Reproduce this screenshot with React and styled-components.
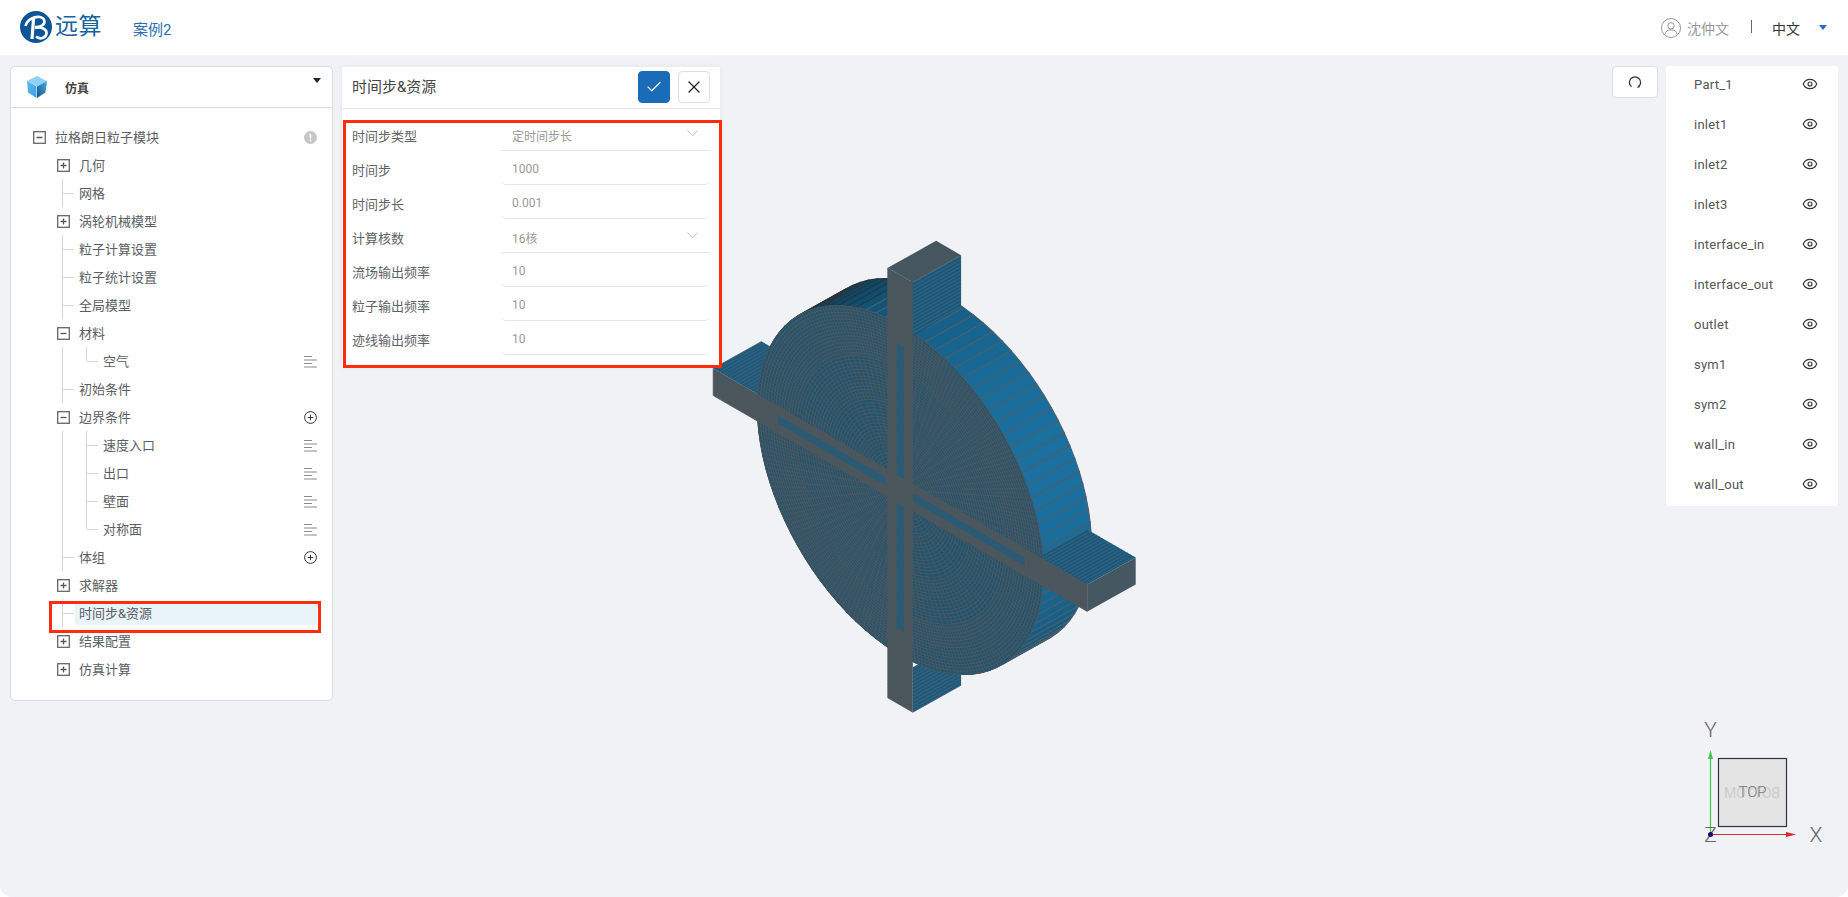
import React from "react";
import styled, { createGlobalStyle } from "styled-components";
import { Eye, Check, X } from "lucide-react";

const FONT = `Roboto, "Noto Sans CJK SC", "Noto Sans", sans-serif`;

const Global = createGlobalStyle`
  html, body { margin: 0; padding: 0; background: #fff; }
  * { box-sizing: border-box; }
  body { font-family: ${FONT}; }
`;

const Page = styled.div`
  width: 1848px; height: 897px; overflow: hidden; position: relative;
  background: #f0f2f6; border-radius: 12px; display: flex; flex-direction: column;
`;
const Header = styled.header`
  height: 55px; flex: none; background: #fff; display: flex; align-items: center;
  padding: 0 20px; position: relative; z-index: 3;
`;
const Brand = styled.div`display: flex; align-items: center; gap: 3px; margin-top: -1px;`;
const BrandName = styled.span`font-size: 23px; color: #17639c; letter-spacing: 0.5px; line-height: 32px; font-weight: 400;`;
const CaseName = styled.span`font-size: 15px; color: #2a6db0; margin-left: 31px; margin-top: 2px;`;
const HeaderRight = styled.div`margin-left: auto; display: flex; align-items: center; margin-right: 1px;`;
const UserName = styled.span`font-size: 14px; color: #999; margin-left: 6px;`;
const Sep = styled.span`width: 1px; height: 13px; background: #666; margin: 0 20px 0 22px; margin-top: -3px;`;
const Lang = styled.span`font-size: 14px; color: #333;`;
const LangCaret = styled.span`
  width: 0; height: 0; margin-left: 19px; border-left: 4px solid transparent;
  border-right: 4px solid transparent; border-top: 5px solid #2a6dc4;
`;

const Workspace = styled.main`
  flex: 1; position: relative; display: flex; align-items: flex-start; padding: 11px 10px 0 10px;
`;
const TreePanel = styled.section`
  width: 323px; height: 635px; background: #fff; border: 1px solid #d9dce3; border-radius: 5px;
  position: relative; z-index: 1; flex: none;
`;
const TreeHead = styled.div`
  height: 41px; border-bottom: 1px solid #dcdfe6; display: flex; align-items: center; padding: 0 11px 0 16px;
`;
const TreeTitle = styled.span`font-size: 12px; font-weight: 700; color: #444; margin-left: 18px;`;
const HeadCaret = styled.span`
  width: 0; height: 0; margin-left: auto; margin-top: -13px; border-left: 4px solid transparent;
  border-right: 4px solid transparent; border-top: 5px solid #222;
`;
const TreeBody = styled.div`padding: 15px 15px 0 1px;`;
const Row = styled.div`
  height: 28px; position: relative; display: flex; align-items: center;
  padding-left: ${p => 21 + p.$level * 24}px;
`;
const Slot = styled.span`width: 18px; flex: none; display: flex; align-items: center;`;
const RowLabel = styled.span`
  flex: 1; height: 23px; line-height: 23px; padding-left: 4px; font-size: 13px; color: #5a5d63;
  border-radius: 3px; background: ${p => (p.$active ? "#e9f3fa" : "transparent")};
`;
const Trailing = styled.span`position: absolute; right: 0; top: 8px; display: flex; width: 13px; height: 13px;`;
const VGuide = styled.i`
  position: absolute; width: 1px; background: #d6d6d6; top: 0; left: ${p => p.$x}px;
  height: ${p => (p.$half ? "14px" : "28px")};
`;
const HGuide = styled.i`
  position: absolute; height: 1px; background: #d6d6d6; top: 14px; width: 11px; left: ${p => p.$x}px;
`;
const RedBox = styled.div`
  position: absolute; border: 3px solid #ff2d0c; pointer-events: none; z-index: 4;
  left: ${p => p.$l}px; top: ${p => p.$t}px; width: ${p => p.$w}px; height: ${p => p.$h}px;
`;

const FormPanel = styled.section`
  width: 378px; height: 300px; margin: 1px 0 0 9px; background: #fff; position: relative; z-index: 1; flex: none;
  box-shadow: 0 0 6px rgba(0,0,0,0.06);
`;
const FormHead = styled.div`
  height: 42px; border-bottom: 1px solid #e4e7ed; display: flex; align-items: center; padding: 0 10px;
`;
const FormTitle = styled.span`font-size: 15px; color: #444; margin-right: auto; margin-top: -4px;`;
const IconBtn = styled.button`
  width: 32px; height: 32px; padding: 0; display: flex; align-items: center; justify-content: center;
  border-radius: 4px; margin-left: 8px; margin-top: -1px;
  border: 1px solid ${p => (p.$primary ? "#1a6bb8" : "#dcdfe6")};
  background: ${p => (p.$primary ? "#1a6bb8" : "#fff")};
  color: ${p => (p.$primary ? "#fff" : "#222")};
`;
const FormBody = styled.div`padding: 8px 10px 0;`;
const FormRow = styled.div`display: grid; grid-template-columns: 149px 1fr; height: 34px; align-items: center;`;
const FormLabel = styled.label`font-size: 13px; color: #606266; padding-top: 2px;`;
const Field = styled.div`
  height: 34px; display: flex; align-items: center; padding: ${p => (p.$select ? "4px" : "3px")} 12px 0 11px;
  font-size: 12px; color: #999; border-bottom: 1px solid #e4e7ed;
  border-radius: ${p => (p.$select ? "0" : "0 0 5px 5px")};
  justify-content: space-between;
`;

const Spacer = styled.div`flex: 1;`;
const RefreshBtn = styled.button`
  width: 46px; height: 32px; padding: 0; background: #fff; border: 1px solid #dcdfe6; border-radius: 4px;
  display: flex; align-items: center; justify-content: center; z-index: 1; flex: none;
`;
const PartList = styled.ul`
  list-style: none; margin: 0 0 0 8px; padding: 0; width: 172px; background: #fff; border-radius: 4px; z-index: 1; flex: none;
`;
const PartRow = styled.li`
  height: 40px; display: flex; align-items: center; justify-content: space-between;
  padding: 0 20px 4px 28px; font-size: 13px; color: #555; letter-spacing: 0.25px;
`;

const Model = styled.svg`position: absolute; left: 690px; top: 110px; z-index: 0;`;
const Axes = styled.svg`position: absolute; left: 1660px; top: 590px; z-index: 0;`;

/* ---------- icons ---------- */
const Logo = () => (
  <svg width="32" height="32" viewBox="0 0 32 32">
    <circle cx="16" cy="16" r="16" fill="#0f5499" />
    <path d="M5.500 15C7 9 14 5 20 6c5 1 6 6 2 8.500-2 1.300-4 1.500-7 1.500" fill="none" stroke="#fff" strokeWidth="2.600" />
    <path d="M13.500 8 12 28" fill="none" stroke="#fff" strokeWidth="3.200" />
    <path d="M15 17c6-1.500 12 1 11.500 5.500C26 27 20 29 16 25.500" fill="none" stroke="#fff" strokeWidth="2.600" />
  </svg>
);
const Cube = () => (
  <svg width="20" height="22" viewBox="0 0 20 22">
    <defs>
      <linearGradient id="cl" x1="0" y1="0" x2="1" y2="1"><stop offset="0" stopColor="#5db8f0" /><stop offset="1" stopColor="#3f9fe6" /></linearGradient>
      <linearGradient id="cr" x1="0" y1="1" x2="1" y2="0"><stop offset="0" stopColor="#15548f" /><stop offset="1" stopColor="#4aa8e4" /></linearGradient>
    </defs>
    <path d="M0 5 10 0l10 5-10 5.500z" fill="#8ed2f6" />
    <path d="M0 5l9.500 5.500V22L1 16.500z" fill="url(#cl)" />
    <path d="M20 5l-10 5.500V22l8.500-5.500z" fill="url(#cr)" />
  </svg>
);
const Box = ({ open }) => (
  <svg width="13" height="13" viewBox="0 0 13 13">
    <rect x="0.700" y="0.700" width="11.600" height="11.600" fill="#fff" stroke="#666" strokeWidth="1.300" />
    <path d={open ? "M3.500 6.500h6" : "M3.500 6.500h6M6.500 3.500v6"} stroke="#555" strokeWidth="1.300" />
  </svg>
);
const Lines = () => (
  <svg width="13" height="13" viewBox="0 0 13 13">
    <path d="M0 1.500h8M0 5h13M0 8.500h8M0 12h13" stroke="#8a8a8a" strokeWidth="1" />
  </svg>
);
const PlusCircle = () => (
  <svg width="13" height="13" viewBox="0 0 13 13" fill="none">
    <circle cx="6.500" cy="6.500" r="5.900" stroke="#333" />
    <path d="M3.800 6.500h5.400M6.500 3.800v5.400" stroke="#333" />
  </svg>
);
const Info = () => (
  <svg width="13" height="13" viewBox="0 0 13 13">
    <circle cx="6.500" cy="6.500" r="6.500" fill="#c6c6c6" />
    <path d="M6.500 2.800v4.600M6.500 8.800v1.500" stroke="#fff" strokeWidth="1.500" />
  </svg>
);
const Chevron = () => (
  <svg width="11" height="7" viewBox="0 0 11 7" style={{ marginTop: -4 }}>
    <path d="M.5.500 5.500 6l5-5.500" fill="none" stroke="#c0c4cc" />
  </svg>
);
const User = () => (
  <svg width="20" height="20" viewBox="0 0 20 20" fill="none" stroke="#8a8a8a" strokeWidth="0.900">
    <circle cx="10" cy="10" r="9.500" />
    <circle cx="10" cy="7.800" r="3.200" />
    <path d="M3.800 16.500c.6-3.200 3-4.700 6.200-4.700s5.600 1.500 6.200 4.700" />
  </svg>
);
const Refresh = () => (
  <svg width="14" height="14" viewBox="0 0 14 14" fill="none">
    <path d="M3.500 11.800A5.600 5.600 0 1 1 10.500 11.800" stroke="#333" strokeWidth="1.300" />
    <path d="M8.700 12.600l2.800-.2-.1-2.700z" fill="#333" />
  </svg>
);

/* ---------- 3D model drawn as a projected mesh ---------- */
const OX = 690, OY = 165;
const C = [900.3 - OX, 490 - OY];
const D = [48.3, -27];
const R = 165, SW = 14.4, SH = 13.5, L = 216;
const P = (u, v, w = 0) => [
  C[0] + u * 0.866 + w * D[0],
  C[1] + u * 0.5 - v + w * D[1],
];
const pts = a => a.map(p => p.map(n => n.toFixed(2)).join(",")).join(" ");
const quad = (u0, v0, w0, u1, v1, w1, u2, v2, w2, u3, v3, w3) =>
  pts([P(u0, v0, w0), P(u1, v1, w1), P(u2, v2, w2), P(u3, v3, w3)]);
const mix = (a, b, t) => {
  const h = x => [1, 3, 5].map(i => parseInt(x.slice(i, i + 2), 16));
  const A = h(a), B = h(b);
  return `rgb(${A.map((c, i) => Math.round(c + (B[i] - c) * t)).join(",")})`;
};

const wall = [];
const SEG = 90;
for (let i = 0; i < SEG; i++) {
  const a = (i / SEG) * 2 * Math.PI, b = ((i + 1) / SEG) * 2 * Math.PI;
  const mid = (a + b) / 2;
  const s = Math.max(0, Math.cos(mid - (30 * Math.PI) / 180));
  wall.push({
    key: i,
    points: pts([
      P(R * Math.cos(a), R * Math.sin(a), 0), P(R * Math.cos(a), R * Math.sin(a), 1),
      P(R * Math.cos(b), R * Math.sin(b), 1), P(R * Math.cos(b), R * Math.sin(b), 0),
    ]),
    fill: mix("#0e4766", "#1b709f", s),
    dark: s < 0.2,
  });
}

const path = (list) => list.map(seg => "M" + seg.map(p => p.map(n => n.toFixed(1)).join(" ")).join("L")).join("");
const ringSegs = [];
for (let r = 3; r < R; r += 3) {
  const seg = [];
  for (let k = 0; k <= 120; k++) {
    const t = (k / 120) * 2 * Math.PI;
    seg.push(P(r * Math.cos(t), r * Math.sin(t)));
  }
  ringSegs.push(seg);
}
/* spokes thin out toward the centre, as in an O-grid mesh */
const spokeSegs = [];
for (let k = 0; k < 240; k++) {
  const t = (k / 240) * 2 * Math.PI;
  const start = k % 8 === 0 ? 12 : k % 4 === 0 ? 40 : k % 2 === 0 ? 80 : 120;
  spokeSegs.push([P(start * Math.cos(t), start * Math.sin(t)), P(R * Math.cos(t), R * Math.sin(t))]);
}
const discEdge = [];
for (let k = 0; k < 120; k++) {
  const t = (k / 120) * 2 * Math.PI;
  discEdge.push(P(R * Math.cos(t), R * Math.sin(t)));
}

const wLines = (fn, from, to, step) => {
  const out = [];
  for (let x = from; x < to; x += step) out.push([fn(x, 0), fn(x, 1)]);
  return out;
};
const vStripLines = [];
for (let u = -SW; u <= SW; u += 3.4) vStripLines.push([P(u, 215), P(u, -215)]);
for (let v = -215; v <= 215; v += 3.4) vStripLines.push([P(-SW, v), P(SW, v)]);
const hStripLines = [];
for (let v = -SH; v <= SH; v += 3.4) hStripLines.push([P(-L, v), P(L, v)]);
for (let u = -L; u <= L; u += 3.4) hStripLines.push([P(u, -SH), P(u, SH)]);

const GRAY = "#485860";
const LINE = "#50565a";
const TAB_LINE = "#4a6170";

const MeshModel = () => (
  <Model width="460" height="560" viewBox="0 0 460 560">
    {wall.map(q => (
      <polygon key={q.key} points={q.points} fill={q.fill} stroke={q.dark ? "#28343c" : "#4a5f6c"} strokeWidth="1.100" />
    ))}

    {/* upper tab */}
    <polygon points={quad(SW, 215, 0, SW, 215, 1, SW, 164, 1, SW, 160, 0)} fill="#175a80" />
    <path d={path(wLines((v, w) => P(SW, v, w), 164, 215, 3.6))} stroke={TAB_LINE} strokeWidth="0.900" />
    <polygon points={quad(-SW, 215, 0, -SW, 215, 1, SW, 215, 1, SW, 215, 0)} fill="#46565f" />
    {/* lower tab */}
    <polygon points={quad(SW, -215, 0, SW, -215, 1, SW, -170, 1, SW, -170, 0)} fill="#1c5a7e" />
    <path d={path(wLines((v, w) => P(SW, v, w), -215, -170, 3.6))} stroke={TAB_LINE} strokeWidth="0.900" />
    {/* right tab */}
    <polygon points={quad(160, SH, 0, 160, SH, 1, L, SH, 1, L, SH, 0)} fill="#175a80" />
    <path d={path(wLines((u, w) => P(u, SH, w), 160, L, 3.6))} stroke={TAB_LINE} strokeWidth="0.900" />
    <polygon points={quad(L, SH, 0, L, SH, 1, L, -SH, 1, L, -SH, 0)} fill="#455861" />
    {/* left tab */}
    <polygon points={quad(-L, SH, 0, -L, SH, 1, -160, SH, 1, -160, SH, 0)} fill="#1c5a7e" />
    <path d={path(wLines((u, w) => P(u, SH, w), -L, -160, 3.6))} stroke={TAB_LINE} strokeWidth="0.800" />

    {/* front disc */}
    <polygon points={pts(discEdge)} fill="#1a5676" />
    <path d={path(ringSegs)} fill="none" stroke={LINE} strokeWidth="1.100" />
    <path d={path(spokeSegs)} fill="none" stroke={LINE} strokeWidth="0.900" />
    <polygon points={pts(discEdge)} fill="none" stroke="#4b5458" strokeWidth="1" />

    {/* cross strips */}
    <polygon points={quad(-SW, 215, 0, SW, 215, 0, SW, -215, 0, -SW, -215, 0)} fill={GRAY} />
    <path d={path(vStripLines)} stroke="#50555a" strokeWidth="0.800" fill="none" />
    <polygon points={quad(-L, SH, 0, L, SH, 0, L, -SH, 0, -L, -SH, 0)} fill={GRAY} />
    <path d={path(hStripLines)} stroke="#50555a" strokeWidth="0.800" fill="none" />

    {/* blue slots along the strips */}
    {[[13, 145], [-140, -15]].map(([a, b]) => (
      <polygon key={a} points={quad(-4.2, b, 0, 4.2, b, 0, 4.2, a, 0, -4.2, a, 0)} fill="#2b5a75" />
    ))}
    {[[-141, -17], [15, 144]].map(([a, b]) => (
      <polygon key={a} points={quad(a, 4, 0, b, 4, 0, b, -4, 0, a, -4, 0)} fill="#2b5a75" />
    ))}
  </Model>
);

const AxisGizmo = () => (
  <Axes width="180" height="220" viewBox="0 0 180 220" fontFamily="Roboto, sans-serif">
    <rect x="58.500" y="113.500" width="68" height="68" fill="#e4e4e4" stroke="#333" strokeWidth="1.200" />
    <text x="92" y="153" textAnchor="middle" fontSize="14" fill="#ccc" transform="translate(184 0) scale(-1 1)" textLength="56">BOTTOM</text>
    <text x="92.500" y="152" textAnchor="middle" fontSize="15" fontWeight="300" fill="#777">TOP</text>
    <path d="M50.500 189V112" stroke="#3fc94c" strokeWidth="1.200" />
    <path d="M50.500 105l-2.500 9h5z" fill="#3fc94c" />
    <path d="M50.500 189.500H128" stroke="#c83232" strokeWidth="1.200" />
    <path d="M136 189.500l-10-2.500v5z" fill="#d42a2a" />
    <text x="50.500" y="92" textAnchor="middle" fontSize="21" fontWeight="300" fill="#666">Y</text>
    <text x="156" y="197" textAnchor="middle" fontSize="21" fontWeight="300" fill="#666">X</text>
    <text x="50.500" y="197" textAnchor="middle" fontSize="21" fontWeight="300" fill="#666">Z</text>
    <circle cx="50.500" cy="189.500" r="2.500" fill="#101070" />
  </Axes>
);

/* ---------- data ---------- */
const tree = [
  { t: "拉格朗日粒子模块", l: 0, box: "open", icon: "info" },
  { t: "几何", l: 1, box: "plus" },
  { t: "网格", l: 1, leaf: true },
  { t: "涡轮机械模型", l: 1, box: "plus" },
  { t: "粒子计算设置", l: 1, leaf: true },
  { t: "粒子统计设置", l: 1, leaf: true },
  { t: "全局模型", l: 1, leaf: true },
  { t: "材料", l: 1, box: "open" },
  { t: "空气", l: 2, last: true, icon: "lines" },
  { t: "初始条件", l: 1, leaf: true },
  { t: "边界条件", l: 1, box: "open", icon: "plus" },
  { t: "速度入口", l: 2, icon: "lines" },
  { t: "出口", l: 2, icon: "lines" },
  { t: "壁面", l: 2, icon: "lines" },
  { t: "对称面", l: 2, last: true, icon: "lines" },
  { t: "体组", l: 1, leaf: true, icon: "plus" },
  { t: "求解器", l: 1, box: "plus" },
  { t: "时间步&资源", l: 1, leaf: true, active: true },
  { t: "结果配置", l: 1, box: "plus" },
  { t: "仿真计算", l: 1, box: "plus" },
];

const formRows = [
  ["时间步类型", "定时间步长", true],
  ["时间步", "1000"],
  ["时间步长", "0.001"],
  ["计算核数", "16核", true],
  ["流场输出频率", "10"],
  ["粒子输出频率", "10"],
  ["迹线输出频率", "10"],
];

const parts = ["Part_1", "inlet1", "inlet2", "inlet3", "interface_in", "interface_out", "outlet", "sym1", "sym2", "wall_in", "wall_out"];

const TrailIcon = ({ kind }) =>
  kind === "info" ? <Info /> : kind === "lines" ? <Lines /> : kind === "plus" ? <PlusCircle /> : null;

const TreeItem = ({ item }) => (
  <Row $level={item.l}>
    {(item.leaf || item.l === 2) && <VGuide $x={50} />}
    {item.leaf && <HGuide $x={51} />}
    {item.l === 2 && <VGuide $x={74} $half={item.last} />}
    {item.l === 2 && <HGuide $x={75} />}
    <Slot>{item.box && <Box open={item.box === "open"} />}</Slot>
    <RowLabel $active={item.active}>{item.t}</RowLabel>
    {item.icon && <Trailing><TrailIcon kind={item.icon} /></Trailing>}
  </Row>
);

export default function App() {
  return (
    <Page>
      <Global />
      <Header>
        <Brand>
          <Logo />
          <BrandName>远算</BrandName>
        </Brand>
        <CaseName>案例2</CaseName>
        <HeaderRight>
          <User />
          <UserName>沈仲文</UserName>
          <Sep />
          <Lang>中文</Lang>
          <LangCaret />
        </HeaderRight>
      </Header>
      <Workspace>
        <TreePanel>
          <TreeHead>
            <Cube />
            <TreeTitle>仿真</TreeTitle>
            <HeadCaret />
          </TreeHead>
          <TreeBody>
            {tree.map(item => <TreeItem key={item.t} item={item} />)}
          </TreeBody>
          <RedBox $l={38} $t={534} $w={272} $h={32} />
        </TreePanel>
        <FormPanel>
          <FormHead>
            <FormTitle>时间步&amp;资源</FormTitle>
            <IconBtn $primary aria-label="确认"><Check size={18} strokeWidth={1.5} /></IconBtn>
            <IconBtn aria-label="关闭"><X size={20} strokeWidth={1.5} /></IconBtn>
          </FormHead>
          <FormBody>
            {formRows.map(([label, value, select]) => (
              <FormRow key={label}>
                <FormLabel>{label}</FormLabel>
                <Field $select={select}>
                  <span>{value}</span>
                  {select && <Chevron />}
                </Field>
              </FormRow>
            ))}
          </FormBody>
          <RedBox $l={1} $t={53} $w={379} $h={248} />
        </FormPanel>
        <Spacer />
        <RefreshBtn aria-label="刷新"><Refresh /></RefreshBtn>
        <PartList>
          {parts.map(p => (
            <PartRow key={p}>
              {p}
              <Eye size={16} strokeWidth={1.7} color="#333" />
            </PartRow>
          ))}
        </PartList>
        <MeshModel />
        <AxisGizmo />
      </Workspace>
    </Page>
  );
}
